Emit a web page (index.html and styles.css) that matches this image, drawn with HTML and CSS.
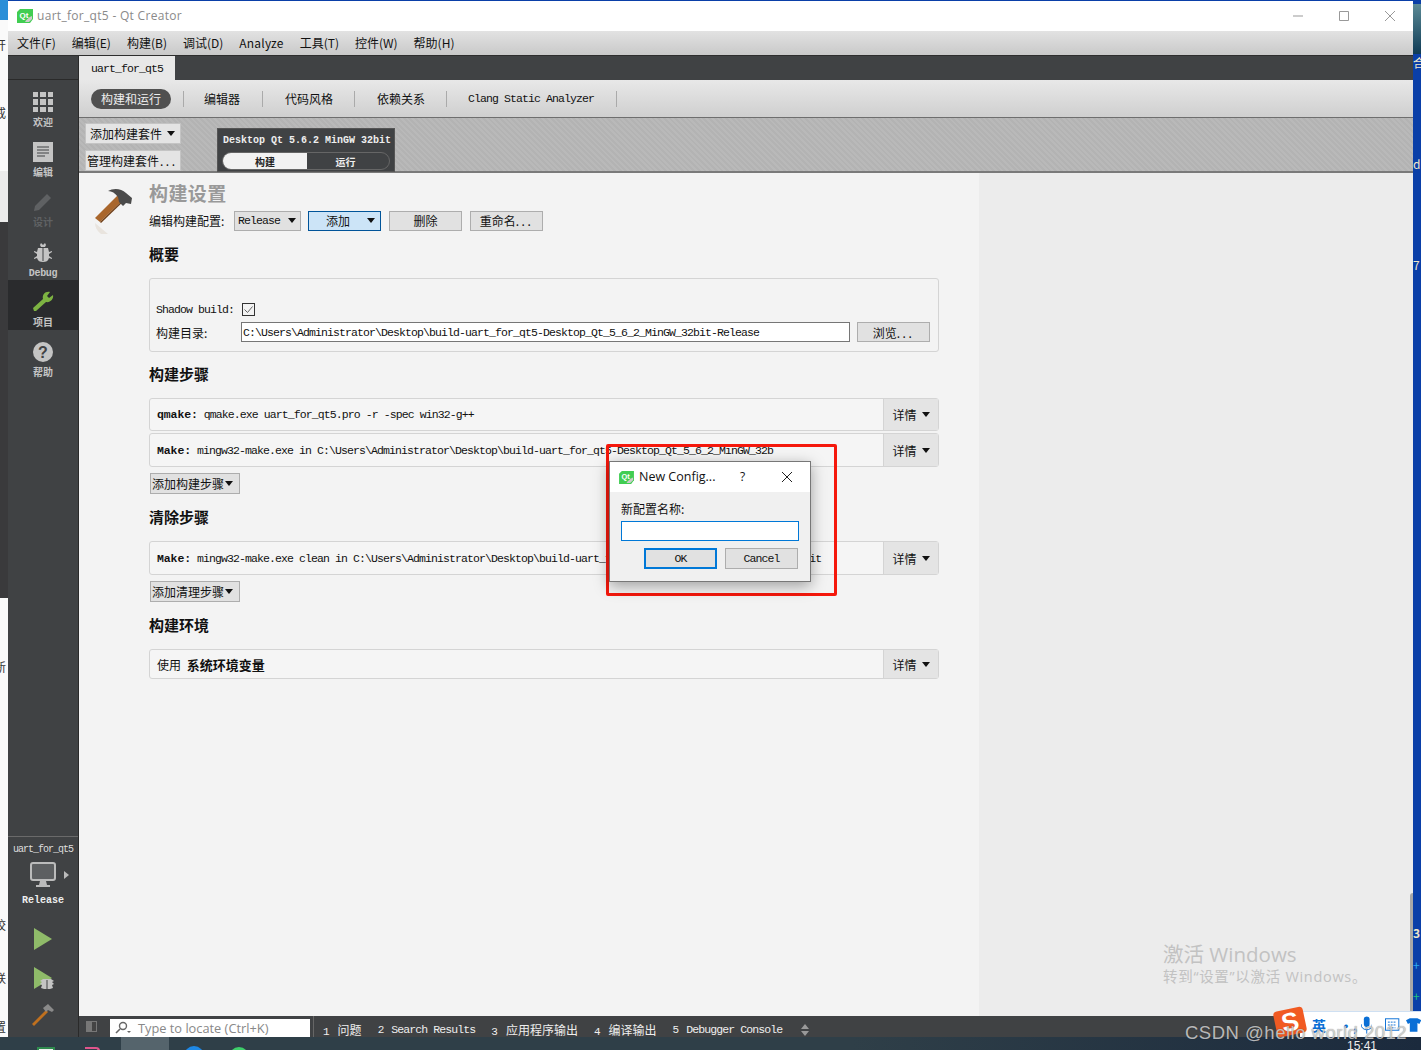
FILE: index.html
```html
<!DOCTYPE html>
<html lang="zh-CN">
<head>
    <meta charset="UTF-8">
    <title>uart_for_qt5 - Qt Creator</title>
    <link rel="stylesheet" href="styles.css">
</head>
<body>
    <div class="desktop">
        <div class="desk-left">
            <div class="strip strip-sky"></div>
            <div class="strip strip-white"></div>
            <div class="strip strip-dark"></div>
            <div class="strip strip-light"></div>
            <span class="frag frag-a">开</span>
            <span class="frag frag-b">戒</span>
            <span class="frag frag-c">新</span>
            <span class="frag frag-d">校</span>
            <span class="frag frag-e">联</span>
            <span class="frag frag-f">置</span>
        </div>
        <div class="window">
            <div class="titlebar">
                <svg class="qt-logo" width="16" height="14" viewBox="0 0 16 14"><path d="M3 0h13v10l-3 4H0V3z" fill="#41cd52"/><text x="2.5" y="8.5" class="qt-mark">Qt</text><path d="M8 13c1-2 4-5 7-6v3l-3 3z" fill="#ccc"/></svg>
                <span class="title-text">uart_for_qt5 - Qt Creator</span>
                <div class="win-btns">
                    <svg width="12" height="12" viewBox="0 0 12 12"><path d="M1 6h10" stroke="#999" fill="none"/></svg>
                    <svg width="12" height="12" viewBox="0 0 12 12"><path d="M1.5 1.5h9v9h-9z" stroke="#999" fill="none"/></svg>
                    <svg width="12" height="12" viewBox="0 0 12 12"><path d="M1 1l10 10M11 1L1 11" stroke="#999" fill="none"/></svg>
                </div>
            </div>
            <div class="menubar">
                <span>文件(F)</span><span>编辑(E)</span><span>构建(B)</span><span>调试(D)</span><span class="menu-wide">Analyze</span><span>工具(T)</span><span>控件(W)</span><span>帮助(H)</span>
            </div>
            <div class="workarea">
                <div class="sidebar">
                    <div class="side-top"></div>
                    <div class="mode">
                        <svg width="22" height="20" viewBox="0 0 22 20"><path d="M1 0h5v5H1zM8 0h6v5H8zM16 0h5v5h-5zM1 7h5v6H1zM8 7h6v6H8zM16 7h5v6h-5zM1 15h5v5H1zM8 15h6v5H8zM16 15h5v5h-5z" fill="#c4c4c4"/></svg>
                        <span>欢迎</span>
                    </div>
                    <div class="mode">
                        <svg width="20" height="20" viewBox="0 0 20 20"><path d="M0 0h20v20H0z" fill="#c4c4c4"/><path d="M4 5h12M4 8h12M4 11h12M4 14h8" stroke="#404244" stroke-width="1.2"/></svg>
                        <span>编辑</span>
                    </div>
                    <div class="mode mode-off">
                        <svg width="20" height="20" viewBox="0 0 20 20"><path d="M1 19l1-5L14 2l4 4L6 18z" fill="#5f6163"/></svg>
                        <span>设计</span>
                    </div>
                    <div class="mode">
                        <svg width="20" height="20" viewBox="0 0 20 20"><path d="M7 3l1-2 2 2 2-2 1 2-1 2H8zM5 6h10l1 4 3-1v1l-3 2v2l3 2v1l-3-1c-1 3-3 4-6 4s-5-1-6-4l-3 1v-1l3-2v-2L1 10V9l3 1z" fill="#c4c4c4"/><path d="M10 6v13" stroke="#404244"/></svg>
                        <span class="mono-label">Debug</span>
                    </div>
                    <div class="mode mode-active">
                        <svg width="22" height="22" viewBox="0 0 22 22"><path d="M2 21l-1-3 10-9c-1-4 2-8 7-7l-3 4 2 2 4-3c1 4-3 8-7 7L4 21z" fill="#7db342"/></svg>
                        <span>项目</span>
                    </div>
                    <div class="mode">
                        <svg width="20" height="20" viewBox="0 0 20 20"><circle cx="10" cy="10" r="10" fill="#c4c4c4"/><text x="10" y="15.5" text-anchor="middle" class="help-mark">?</text></svg>
                        <span>帮助</span>
                    </div>
                    <div class="side-bottom">
                        <div class="side-project">uart_for_qt5</div>
                        <div class="side-target">
                            <svg width="26" height="25" viewBox="0 0 26 25"><rect x="1" y="1" width="24" height="17" rx="2" fill="#5d5f61" stroke="#bbb" stroke-width="2"/><path d="M10 19h6l1 4H9z" fill="#bbb"/><path d="M6 23h14v2H6z" fill="#bbb"/></svg>
                            <svg class="target-arrow" width="5" height="8" viewBox="0 0 5 8"><path d="M0 0l5 4-5 4z" fill="#bbb"/></svg>
                        </div>
                        <div class="side-release">Release</div>
                        <svg class="side-run" width="20" height="24" viewBox="0 0 20 24"><path d="M1 1l18 11L1 23z" fill="#8fbb69"/></svg>
                        <svg class="side-run-debug" width="22" height="24" viewBox="0 0 22 24"><path d="M1 1l18 11L1 23z" fill="#8fbb69"/><path d="M10 13h8l3 2-2 1 2 2-2 1 1 3-3 1h-6l-3-1 1-3-2-1 2-2-2-1z" fill="#c4c4c4"/><path d="M14 14v9" stroke="#404244"/></svg>
                        <svg class="side-build" width="24" height="22" viewBox="0 0 24 22"><path d="M1 20L15 6l2 2L3 22z" fill="#c0701e"/><path d="M12 4l5-4 6 6-2 2-4-2-2 2z" fill="#8a8a8a"/></svg>
                    </div>
                </div>
                <div class="main">
                    <div class="tabstrip"><div class="tab mono">uart_for_qt5</div></div>
                    <div class="subnav">
                        <div class="pill">构建和运行</div>
                        <div class="subnav-item w-edit">编辑器</div>
                        <div class="subnav-item">代码风格</div>
                        <div class="subnav-item">依赖关系</div>
                        <div class="subnav-item mono">Clang Static Analyzer</div>
                    </div>
                    <div class="kitbar">
                        <div class="kit-btns">
                            <div class="kit-btn">添加构建套件<i class="caret"></i></div>
                            <div class="kit-btn">管理构建套件<span class="dots">...</span></div>
                        </div>
                        <div class="kit-card">
                            <div class="kit-name">Desktop Qt 5.6.2 MinGW 32bit</div>
                            <div class="kit-switch"><div class="kit-on">构建</div><div class="kit-off">运行</div></div>
                        </div>
                    </div>
                    <div class="content">
                        <div class="settings">
                            <div class="settings-head">
                                <svg class="hammer" width="42" height="50" viewBox="0 0 42 50">
                                    <path d="M3 33L29 7l5 5L8 37z" fill="#a9662c"/>
                                    <path d="M8 37l26-25 1 1L9 38z" fill="#6f3f18"/>
                                    <path d="M16 6c5-3 13-3 18 2l6 5-1 6-5-1-3 3-4-4-1-5c-3-4-6-6-10-6z" fill="#4a4a4a"/>
                                    <path d="M3 38l13 11H9c-4-3-6-7-6-11z" fill="#e9e4de"/>
                                </svg>
                                <div>
                                    <h1 class="settings-title">构建设置</h1>
                                    <div class="config-row">
                                        <span class="config-label">编辑构建配置:</span>
                                        <div class="btn combo mono"><span>Release</span><i class="caret"></i></div>
                                        <div class="btn btn-add"><span>添加</span><i class="caret"></i></div>
                                        <div class="btn btn-plain">删除</div>
                                        <div class="btn btn-plain">重命名<span class="dots">...</span></div>
                                    </div>
                                </div>
                            </div>

                            <h2 class="sect first">概要</h2>
                            <div class="panel">
                                <div class="shadow-row"><span class="mono">Shadow build:</span>
                                    <svg class="check" width="13" height="13" viewBox="0 0 13 13"><rect x=".5" y=".5" width="12" height="12" fill="#f3f3f3" stroke="#333"/><path d="M2.5 6.5l3 3 5-6" fill="none" stroke="#666"/></svg>
                                </div>
                                <div class="dir-row">
                                    <span class="dir-label">构建目录:</span>
                                    <div class="dir-input mono">C:\Users\Administrator\Desktop\build-uart_for_qt5-Desktop_Qt_5_6_2_MinGW_32bit-Release</div>
                                    <div class="btn btn-browse">浏览<span class="dots">...</span></div>
                                </div>
                            </div>

                            <h2 class="sect">构建步骤</h2>
                            <div class="step">
                                <div class="step-text mono"><b>qmake:</b> qmake.exe uart_for_qt5.pro -r -spec win32-g++</div>
                                <div class="detail">详情<i class="caret"></i></div>
                            </div>
                            <div class="step step-tall">
                                <div class="step-text mono"><b>Make:</b> mingw32-make.exe in C:\Users\Administrator\Desktop\build-uart_for_qt5-Desktop_Qt_5_6_2_MinGW_32b</div>
                                <div class="detail">详情<i class="caret"></i></div>
                            </div>
                            <div class="add-step">添加构建步骤<i class="caret"></i></div>

                            <h2 class="sect sect-clean">清除步骤</h2>
                            <div class="step step-tall">
                                <div class="step-text mono"><b>Make:</b> mingw32-make.exe clean in C:\Users\Administrator\Desktop\build-uart_for_qt5-Desktop_Qt_5_6_2_MinGW_32bit</div>
                                <div class="detail">详情<i class="caret"></i></div>
                            </div>
                            <div class="add-step">添加清理步骤<i class="caret"></i></div>

                            <h2 class="sect sect-clean">构建环境</h2>
                            <div class="step step-env">
                                <div class="step-text env-text">使用 <b>系统环境变量</b></div>
                                <div class="detail">详情<i class="caret"></i></div>
                            </div>
                        </div>
                        <div class="side-pane"></div>
                    </div>
                    <div class="statusbar">
                        <svg class="toggle" width="11" height="11" viewBox="0 0 11 11"><path d="M0 0h11v11H0z" fill="#777"/><path d="M6 1h4v9H6z" fill="#444"/></svg>
                        <div class="locator">
                            <svg width="16" height="14" viewBox="0 0 16 14"><circle cx="8" cy="5" r="3.5" fill="none" stroke="#666" stroke-width="1.4"/><path d="M5 8l-4 4" stroke="#666" stroke-width="1.6"/><path d="M12 10h4l-2 2z" fill="#666"/></svg>
                            <span>Type to locate (Ctrl+K)</span>
                        </div>
                        <div class="out-tabs">
                            <span><em>1</em>问题</span>
                            <span class="mono"><em>2</em>Search Results</span>
                            <span><em>3</em>应用程序输出</span>
                            <span><em>4</em>编译输出</span>
                            <span class="mono"><em>5</em>Debugger Console</span>
                            <svg width="8" height="12" viewBox="0 0 8 12"><path d="M4 0l4 5H0zM4 12L0 7h8z" fill="#999"/></svg>
                        </div>
                    </div>
                </div>
            </div>
        </div>
        <div class="desk-right">
            <div class="teal"></div>
            <span class="rfrag rfrag-a">合</span>
            <span class="rfrag rfrag-b">d.</span>
            <span class="rfrag rfrag-c">7</span>
            <span class="rfrag rfrag-d">3</span>
            <span class="rfrag rfrag-e">+</span>
            <span class="rfrag rfrag-f">+</span>
        </div>
        <div class="taskbar">
            <i class="app app-white"></i>
            <i class="app app-pink"></i>
            <div class="task-active"></div>
            <i class="app app-blue"></i>
            <i class="app app-green"></i>
            <span class="task-clock">15:41</span>
        </div>

        <div class="edge"></div>
        <div class="redbox"></div>
        <div class="dialog">
            <div class="dlg-title">
                <svg width="15" height="13" viewBox="0 0 16 14"><path d="M3 0h13v10l-3 4H0V3z" fill="#41cd52"/><text x="2.5" y="8.5" class="qt-mark">Qt</text><path d="M8 13c1-2 4-5 7-6v3l-3 3z" fill="#ccc"/></svg>
                <span class="dlg-name">New Config...</span>
                <span class="dlg-help">?</span>
                <svg class="dlg-close" width="12" height="12" viewBox="0 0 12 12"><path d="M1 1l10 10M11 1L1 11" stroke="#222" fill="none"/></svg>
            </div>
            <div class="dlg-body">
                <div class="dlg-label">新配置名称:</div>
                <div class="dlg-input"></div>
                <div class="dlg-btns">
                    <div class="dlg-btn dlg-ok mono">OK</div>
                    <div class="dlg-btn mono">Cancel</div>
                </div>
            </div>
        </div>

        <div class="activate">
            <div class="act-big">激活 Windows</div>
            <div class="act-small">转到“设置”以激活 Windows。</div>
        </div>
        <div class="ime">
            <div class="ime-logo">S</div>
            <span class="ime-item">英</span>
            <span class="ime-item ime-dots">•,</span>
            <svg width="12" height="18" viewBox="0 0 12 18"><rect x="3" y="0" width="6" height="11" rx="3" fill="#0a6fd6"/><path d="M0 8c0 8 12 8 12 0M6 13v5" stroke="#0a6fd6" fill="none"/></svg>
            <svg width="15" height="13" viewBox="0 0 15 13"><rect x=".5" y=".5" width="14" height="12" fill="none" stroke="#0a6fd6"/><path d="M3 4h9M3 7h9M4 10h7" stroke="#0a6fd6" stroke-dasharray="2 1"/></svg>
            <svg class="ime-shirt" width="16" height="14" viewBox="0 0 16 14"><path d="M0 2l4-2h8l4 2-2 4-2-1v9H4V5L2 6z" fill="#0a6fd6"/></svg>
        </div>
        <div class="csdn">CSDN @hello world 2012</div>
    </div>
</body>
</html>
```

FILE: styles.css
```css
* {
    box-sizing: border-box;
}
body {
    margin: 0;
    width: 1421px;
    height: 1050px;
    overflow: hidden;
    background: #0a3fa8;
    font-family: "Noto Sans CJK SC", "Liberation Sans", sans-serif;
    font-size: 12px;
    color: #111;
}
.mono {
    font-family: "Liberation Mono", "Noto Sans CJK SC", monospace;
    font-size: 11.5px;
    letter-spacing: -0.9px;
}
i.caret {
    display: inline-block;
    width: 0;
    height: 0;
    border-left: 4px solid transparent;
    border-right: 4px solid transparent;
    border-top: 5px solid #111;
}
.dots {
    letter-spacing: 2.5px;
}
.qt-mark {
    font-family: "Liberation Sans", sans-serif;
    font-size: 8px;
    font-weight: 700;
    fill: #fff;
}

.desktop {
    position: relative;
    width: 1421px;
    height: 1050px;
    display: flex;
    flex-wrap: wrap;
    align-content: flex-start;
}
.desk-left {
    position: relative;
    width: 8px;
    height: 1037px;
    display: flex;
    flex-direction: column;
    overflow: hidden;
}
.strip-sky {
    height: 20px;
    background: #2a8fd8;
}
.strip-white {
    height: 202px;
    background: linear-gradient(#fafafa 75%, #ececec 75%);
}
.strip-dark {
    height: 376px;
    background: #3a3a3c;
}
.strip-light {
    flex: 1;
    background: #fafafa;
}
.frag {
    position: absolute;
    left: -6px;
    font-size: 12px;
    line-height: 14px;
    color: #333;
}
.frag-a { top: 38px; }
.frag-b { top: 106px; }
.frag-c { top: 660px; }
.frag-d { top: 918px; }
.frag-e { top: 971px; }
.frag-f { top: 1020px; }
.window {
    width: 1405px;
    height: 1036px;
    margin-top: 1px;
    display: flex;
    flex-direction: column;
}
.desk-right {
    position: relative;
    width: 8px;
    height: 1037px;
    background: #0a3fa8;
    overflow: hidden;
}
.teal {
    height: 50px;
    margin-top: 4px;
    background: linear-gradient(#5b8a96, #0f3b55);
}
.rfrag {
    position: absolute;
    left: 0;
    font-size: 12px;
    line-height: 14px;
    color: #f2e7c8;
}
.rfrag-a { top: 56px; }
.rfrag-b { top: 157px; }
.rfrag-c { top: 258px; }
.rfrag-d { top: 926px; font-weight: 700; }
.rfrag-e { top: 958px; color: #2ea8ee; }
.rfrag-f { top: 989px; color: #1fc27a; }

.titlebar {
    height: 30px;
    background: #fff;
    display: flex;
    align-items: center;
    padding-left: 9px;
    color: #8a8a8a;
}
.title-text {
    margin-left: 4px;
    margin-top: -2px;
    font-family: "Open Sans", sans-serif;
    font-size: 12px;
    letter-spacing: .3px;
}
.win-btns {
    margin-left: auto;
    display: flex;
    gap: 34px;
    padding-right: 17px;
}
.menubar {
    height: 25px;
    flex-shrink: 0;
    background: linear-gradient(#e2e2e2, #c9c9c9);
    border-bottom: 1px solid #2e2e2e;
    display: flex;
    align-items: center;
    padding: 0 0 2px 9px;
    gap: 16px;
    font-size: 12px;
}
.menu-wide {
    letter-spacing: .2px;
}
.workarea {
    flex: 1;
    display: flex;
    min-height: 0;
}

.sidebar {
    width: 71px;
    background: #404244;
    border-right: 1px solid #2a2a2a;
    display: flex;
    flex-direction: column;
    color: #c4c4c4;
}
.side-top {
    height: 24px;
    border-bottom: 1px solid #2a2a2a;
}
.mode {
    height: 50px;
    display: flex;
    flex-direction: column;
    align-items: center;
    justify-content: flex-end;
    gap: 4px;
    padding-bottom: 2px;
    font-size: 10px;
    font-weight: 700;
    line-height: 12px;
}
.mode-off {
    color: #5f6163;
}
.mode-active {
    background: #2a2b2d;
}
.mono-label {
    font-family: "Liberation Mono", monospace;
    letter-spacing: -.3px;
    position: relative;
    top: 2px;
}
.help-mark {
    font-family: "Liberation Sans", sans-serif;
    font-size: 16px;
    font-weight: 700;
    fill: #404244;
}
.side-bottom {
    margin-top: auto;
    border-top: 1px solid #6a6a6a;
    display: flex;
    flex-direction: column;
    align-items: center;
    height: 201px;
    padding-top: 7px;
}
.side-project {
    font-family: "Liberation Mono", monospace;
    font-size: 10px;
    letter-spacing: -1px;
    color: #ddd;
    line-height: 12px;
}
.side-target {
    display: flex;
    align-items: center;
    margin-top: 6px;
    margin-left: 12px;
    gap: 8px;
}
.side-release {
    font-family: "Liberation Mono", monospace;
    font-weight: 700;
    font-size: 10px;
    color: #eee;
    line-height: 12px;
    margin-top: 8px;
}
.side-run {
    margin-top: 20px;
}
.side-run-debug {
    margin-top: 15px;
    margin-left: 2px;
}
.side-build {
    margin-top: 14px;
}

.main {
    flex: 1;
    display: flex;
    flex-direction: column;
    min-width: 0;
}
.tabstrip {
    height: 24px;
    background: #404244;
    flex-shrink: 0;
}
.tab {
    width: 96px;
    height: 24px;
    background: #e8e8e8;
    text-align: center;
    line-height: 25px;
    color: #111;
}
.subnav {
    height: 38px;
    flex-shrink: 0;
    background: linear-gradient(#e8e8e8, #cfcfcf);
    border-bottom: 1px solid #6e6e6e;
    display: flex;
    align-items: center;
    padding-left: 12px;
}
.pill {
    width: 80px;
    height: 20px;
    border-radius: 10px;
    background: #505050;
    color: #eee;
    text-align: center;
    line-height: 20px;
    margin-right: 12px;
}
.subnav-item {
    border-left: 1px solid #aaa;
    height: 16px;
    line-height: 16px;
    padding: 0 21px 0 22px;
}
.subnav-item.w-edit {
    padding: 0 22px 0 20px;
}
.subnav-item.mono {
    padding: 0 22px 0 21px;
    border-right: 1px solid #aaa;
}
.kitbar {
    height: 55px;
    flex-shrink: 0;
    background: repeating-linear-gradient(45deg, #b9b9b9 0 2px, #b3b3b3 2px 4px);
    border-bottom: 2px solid #7a7a7a;
    display: flex;
    padding: 5px 0 0 6px;
}
.kit-btns {
    width: 96px;
    display: flex;
    flex-direction: column;
    gap: 6px;
}
.kit-btn {
    height: 21px;
    background: #e4e4e4;
    border: 1px solid #c4c4c4;
    line-height: 19px;
    padding-left: 4px;
    display: flex;
    align-items: center;
    gap: 5px;
    white-space: nowrap;
    overflow: hidden;
    font-size: 12px;
}
.kit-btn:last-child {
    padding-left: 1px;
    gap: 1px;
}
.kit-card {
    width: 178px;
    height: 44px;
    margin-left: 36px;
    margin-top: 5px;
    background: #404244;
    border: 1px solid #555;
    padding: 5px 4px 0 5px;
    color: #eee;
}
.kit-name {
    font-family: "Liberation Mono", monospace;
    font-size: 10px;
    font-weight: 700;
    line-height: 14px;
    white-space: nowrap;
}
.kit-switch {
    display: flex;
    height: 18px;
    margin-top: 4px;
    margin-left: -1px;
    border: 1px solid #666;
    border-radius: 9px;
    overflow: hidden;
    font-size: 10px;
    font-weight: 700;
    line-height: 17px;
    text-align: center;
}
.kit-on {
    width: 84px;
    background: #f2f2f2;
    color: #222;
}
.kit-off {
    flex: 1;
    padding-right: 5px;
}

.content {
    flex: 1;
    display: flex;
    min-height: 0;
}
.settings {
    width: 900px;
    background: #f3f3f3;
    padding: 8px 40px 0 70px;
    position: relative;
}
.side-pane {
    flex: 1;
    background: #ececec;
}
.settings-head {
    display: flex;
}
.hammer {
    position: absolute;
    left: 13px;
    top: 12px;
}
.settings-title {
    margin: 0;
    font-size: 19px;
    font-weight: 700;
    line-height: 24px;
    color: #999;
    letter-spacing: .4px;
}
.config-row {
    display: flex;
    align-items: center;
    margin-top: 5px;
    height: 21px;
}
.config-label {
    width: 85px;
}
.btn {
    height: 20px;
    background: #e1e1e1;
    border: 1px solid #adadad;
    display: flex;
    align-items: center;
    justify-content: center;
}
.combo {
    width: 67px;
    justify-content: space-between;
    padding: 0 4px 0 3px;
}
.btn-add {
    width: 73px;
    margin-left: 7px;
    background: #cce4f7;
    border-color: #005499;
    justify-content: space-between;
    padding: 0 5px 0 17px;
}
.btn-plain {
    width: 73px;
    margin-left: 8px;
}
.sect {
    margin: 12px 0 14px;
    font-size: 15px;
    font-weight: 700;
    line-height: 20px;
    color: #111;
}
.sect.first {
    margin: 13px 0 14px;
}
.sect.sect-clean {
    margin: 13px 0 14px;
}
.panel {
    width: 790px;
    height: 74px;
    background: #f3f3f3;
    border: 1px solid #d4d4d4;
    border-radius: 3px;
    padding: 22px 8px 0 6px;
}
.shadow-row {
    display: flex;
    align-items: center;
    gap: 8px;
    height: 16px;
}
.dir-row {
    display: flex;
    align-items: center;
    margin-top: 5px;
    height: 20px;
}
.dir-label {
    width: 85px;
}
.dir-input {
    width: 609px;
    height: 20px;
    background: #fff;
    border: 1px solid #767676;
    line-height: 20px;
    padding-left: 1px;
    white-space: nowrap;
    overflow: hidden;
}
.btn-browse {
    width: 73px;
    margin-left: 7px;
}
.step {
    width: 790px;
    height: 33px;
    background: #f5f5f5;
    border: 1px solid #d4d4d4;
    border-radius: 3px;
    display: flex;
    align-items: center;
    margin-bottom: 2px;
}
.step-tall {
    height: 34px;
}
.step-env {
    height: 30px;
}
.step-text {
    flex: 1;
    min-width: 0;
    padding-left: 7px;
    white-space: nowrap;
    overflow: hidden;
}
.step-text.mono b {
    letter-spacing: -.1px;
}
.env-text {
    font-size: 12px;
}
.env-text b {
    font-size: 13px;
    margin-left: 3px;
}
.detail {
    width: 55px;
    height: 100%;
    background: #e4e4e4;
    border-left: 1px solid #d4d4d4;
    display: flex;
    align-items: center;
    justify-content: center;
    gap: 5px;
}
.add-step {
    width: 90px;
    height: 21px;
    margin: 6px 0 0 1px;
    background: #e1e1e1;
    border: 1px solid #adadad;
    display: flex;
    align-items: center;
    gap: 1px;
    padding-left: 1px;
}

.statusbar {
    height: 21px;
    flex-shrink: 0;
    background: #404244;
    display: flex;
    align-items: flex-end;
    color: #eee;
}
.toggle {
    margin: 0 13px 5px 7px;
}
.locator {
    width: 200px;
    height: 18px;
    background: #fff;
    color: #888;
    display: flex;
    align-items: center;
    gap: 7px;
    padding-left: 5px;
    font-family: "Open Sans", sans-serif;
    font-size: 12.8px;
    white-space: nowrap;
    overflow: hidden;
}
.out-tabs {
    display: flex;
    align-items: center;
    gap: 16px;
    height: 21px;
    margin-left: 3px;
    padding: 6px 0 0 9px;
    border-left: 1px solid #666;
    white-space: nowrap;
}
.out-tabs em {
    font-style: normal;
    font-family: "Liberation Mono", monospace;
    font-size: 11px;
    margin-right: 8px;
}
.out-tabs svg {
    margin-left: 3px;
}

.taskbar {
    width: 1421px;
    height: 13px;
    background: linear-gradient(90deg, #2f3f48, #2f3f48 60%, #1b2a3d);
    position: relative;
    display: flex;
    overflow: hidden;
}
.app {
    display: block;
    flex-shrink: 0;
    margin-top: 10px;
    height: 14px;
}
.app-white {
    width: 18px;
    margin-left: 37px;
    background: #eee;
    border: 2px solid #2f8a4e;
}
.app-pink {
    width: 15px;
    margin-left: 30px;
    border-top: 2px solid #e0558c;
    border-right: 2px solid #e0558c;
    border-radius: 0 4px 0 0;
}
.task-active {
    width: 48px;
    height: 13px;
    margin-left: 21px;
    background: #55646c;
}
.app-blue {
    width: 20px;
    height: 20px;
    margin-top: 9px;
    margin-left: 15px;
    border-radius: 50%;
    background: #1e88e5;
}
.app-green {
    width: 20px;
    height: 20px;
    margin-left: 25px;
    border-radius: 50%;
    background: #3ecf6a;
}
.task-clock {
    position: absolute;
    left: 1347px;
    top: 2px;
    color: #eee;
    font-family: "Liberation Sans", sans-serif;
    font-size: 12px;
}

.edge {
    position: absolute;
    left: 1410px;
    top: 893px;
    width: 3px;
    height: 123px;
    background: #a8a8a8;
    border-radius: 3px 0 0 0;
}
.redbox {
    position: absolute;
    left: 606px;
    top: 444px;
    width: 231px;
    height: 152px;
    border: 3px solid #f5180c;
    border-radius: 2px;
}
.dialog {
    position: absolute;
    left: 609px;
    top: 461px;
    width: 202px;
    height: 121px;
    background: #f0f0f0;
    border: 1px solid #777;
    box-shadow: 0 4px 14px rgba(0, 0, 0, .35);
}
.dlg-title {
    height: 30px;
    background: #fff;
    display: flex;
    align-items: center;
    padding-left: 9px;
}
.dlg-name {
    margin-left: 5px;
    margin-top: -2px;
    width: 101px;
    font-family: "Open Sans", sans-serif;
    font-size: 12.5px;
    color: #111;
}
.dlg-help {
    width: 41px;
    margin-top: -2px;
    font-family: "Open Sans", sans-serif;
    font-size: 12px;
}
.dlg-body {
    padding: 9px 11px 0 11px;
}
.dlg-label {
    line-height: 16px;
}
.dlg-input {
    width: 178px;
    height: 20px;
    margin-top: 4px;
    background: #fff;
    border: 1px solid #0078d7;
}
.dlg-btns {
    display: flex;
    justify-content: flex-end;
    gap: 8px;
    margin-top: 7px;
    margin-right: 1px;
}
.dlg-btn {
    width: 73px;
    height: 21px;
    background: #e1e1e1;
    border: 1px solid #adadad;
    text-align: center;
    line-height: 19px;
}
.dlg-ok {
    border: 2px solid #0078d7;
    line-height: 17px;
}

.activate {
    position: absolute;
    left: 1163px;
    top: 941px;
    color: #c2c2c2;
}
.act-big {
    font-family: "Open Sans", "Noto Sans CJK SC", sans-serif;
    font-size: 20.5px;
    line-height: 26px;
}
.act-small {
    font-family: "Open Sans", "Noto Sans CJK SC", sans-serif;
    font-size: 14.5px;
    letter-spacing: .7px;
    line-height: 20px;
}
.ime {
    position: absolute;
    left: 1300px;
    top: 1011px;
    width: 121px;
    height: 26px;
    background: #fff;
    border-top: 1px solid #cfe0f2;
    display: flex;
    align-items: center;
    gap: 13px;
    padding-left: 12px;
}
.ime-logo {
    position: absolute;
    left: -25px;
    top: -3px;
    width: 30px;
    height: 26px;
    background: #f15a22;
    color: #fff;
    font-family: "Liberation Sans", sans-serif;
    font-size: 26px;
    font-weight: 700;
    line-height: 26px;
    text-align: center;
    border-radius: 4px;
    transform: rotate(-12deg);
}
.ime-item {
    color: #0a6fd6;
    font-weight: 700;
    font-size: 14px;
}
.ime-dots {
    width: 9px;
}
.ime-shirt {
    margin-left: -7px;
}
.csdn {
    position: absolute;
    left: 1185px;
    top: 1022px;
    font-family: "Liberation Sans", sans-serif;
    font-size: 18.5px;
    letter-spacing: .5px;
    color: rgba(225, 225, 225, .8);
    text-shadow: 0 0 1px rgba(0, 0, 0, .5);
}
```
